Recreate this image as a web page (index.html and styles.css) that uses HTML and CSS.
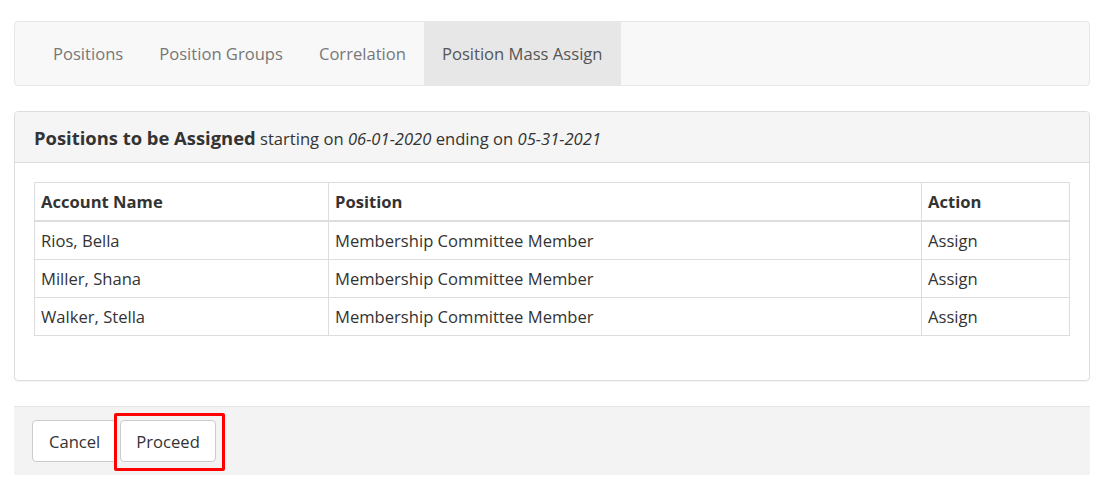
FILE: index.html
```html
<!DOCTYPE html>
<html>
<head>
<meta charset="utf-8">
<link rel="stylesheet" href="styles.css">
</head>
<body>
<nav class="navbar">
  <ul class="nav">
    <li class="tab">Positions</li>
    <li class="tab">Position Groups</li>
    <li class="tab">Correlation</li>
    <li class="tab active">Position Mass Assign</li>
  </ul>
</nav>

<section class="panel">
  <div class="panel-heading">
    <strong class="title">Positions to be Assigned</strong> starting on <em>06-01-2020</em> ending on <em>05-31-2021</em>
  </div>
  <div class="panel-body">
    <table class="grid">
      <colgroup>
        <col class="c1"><col class="c2"><col class="c3">
      </colgroup>
      <thead>
        <tr><th>Account Name</th><th>Position</th><th>Action</th></tr>
      </thead>
      <tbody>
        <tr><td>Rios, Bella</td><td>Membership Committee Member</td><td>Assign</td></tr>
        <tr><td>Miller, Shana</td><td>Membership Committee Member</td><td>Assign</td></tr>
        <tr><td>Walker, Stella</td><td>Membership Committee Member</td><td>Assign</td></tr>
      </tbody>
    </table>
  </div>
</section>

<div class="footer">
  <button class="btn">Cancel</button>
  <span class="highlight"><button class="btn">Proceed</button></span>
</div>
</body>
</html>
```
FILE: styles.css
```css
html, body {
  margin: 0;
  padding: 0;
  background: #fff;
}
body {
  padding: 21px 13px 0 14px;
  font-family: "Open Sans", "Noto Sans", sans-serif;
  font-size: 16.6px;
  color: #333;
}
.navbar {
  height: 63px;
  border: 1px solid #e7e7e7;
  border-radius: 4px;
  background: #f8f8f8;
}
.nav {
  list-style: none;
  margin: 0;
  padding: 0 0 0 20px;
  display: flex;
  height: 100%;
}
.tab {
  padding: 0 18px;
  line-height: 64px;
  color: #777;
}
.tab.active {
  background: #e7e7e7;
  color: #555;
}
.panel {
  margin-top: 25px;
  border: 1px solid #ddd;
  border-radius: 4px;
  box-shadow: 0 1px 1px rgba(0,0,0,0.05);
}
.panel-heading {
  height: 51px;
  box-sizing: border-box;
  padding: 0 19px;
  line-height: 51px;
  background: #f5f5f5;
  border-bottom: 1px solid #ddd;
  border-radius: 3px 3px 0 0;
  font-size: 16.6px;
  color: #333;
}
.title {
  font-size: 18.4px;
  font-weight: 700;
}
.panel-body {
  padding: 19px 19px 44px 19px;
}
.grid {
  width: 100%;
  border-collapse: collapse;
  table-layout: fixed;
}
.c1 { width: 294px; }
.c2 { width: 593px; }
.c3 { width: auto; }
.grid th, .grid td {
  border: 1px solid #ddd;
  text-align: left;
  padding: 0 6px;
  height: 37px;
  vertical-align: middle;
}
.grid th {
  font-weight: 700;
  border-bottom: 2px solid #ddd;
  height: 37px;
}
.footer {
  margin-top: 25px;
  height: 69px;
  border-top: 1px solid #e5e5e5;
  background: #f3f3f3;
  display: flex;
  align-items: flex-start;
  padding: 13px 18px 0;
  box-sizing: border-box;
  gap: 3px;
}
.btn {
  font: inherit;
  font-size: 16.6px;
  color: #333;
  background: #fff;
  border: 1px solid #ccc;
  border-radius: 4px;
  height: 42px;
  padding: 0 16px;
}
.btn + .highlight .btn,
.highlight .btn {
  padding: 0 15px;
}
.highlight {
  position: relative;
  display: inline-block;
}
.highlight::after {
  content: "";
  position: absolute;
  left: -6px;
  top: -7px;
  right: -9px;
  bottom: -9px;
  border: 3px solid #f00;
  border-radius: 2px;
  pointer-events: none;
}
```
